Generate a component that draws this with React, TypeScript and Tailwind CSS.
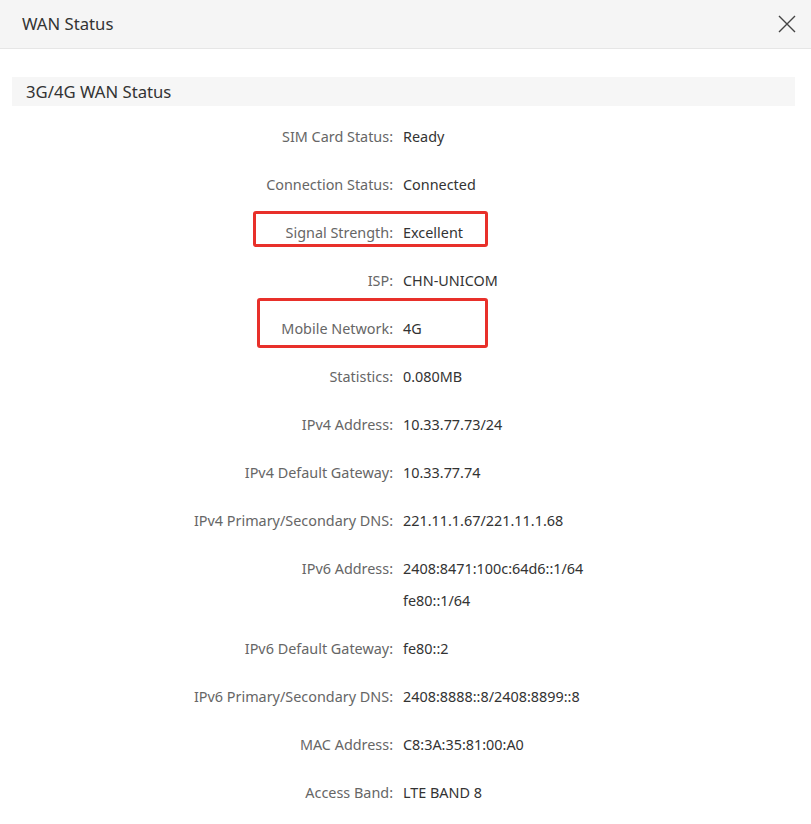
import React from "react";

const rows: { label: string; values: string[] }[] = [
  { label: "SIM Card Status:", values: ["Ready"] },
  { label: "Connection Status:", values: ["Connected"] },
  { label: "Signal Strength:", values: ["Excellent"] },
  { label: "ISP:", values: ["CHN-UNICOM"] },
  { label: "Mobile Network:", values: ["4G"] },
  { label: "Statistics:", values: ["0.080MB"] },
  { label: "IPv4 Address:", values: ["10.33.77.73/24"] },
  { label: "IPv4 Default Gateway:", values: ["10.33.77.74"] },
  { label: "IPv4 Primary/Secondary DNS:", values: ["221.11.1.67/221.11.1.68"] },
  { label: "IPv6 Address:", values: ["2408:8471:100c:64d6::1/64", "fe80::1/64"] },
  { label: "IPv6 Default Gateway:", values: ["fe80::2"] },
  { label: "IPv6 Primary/Secondary DNS:", values: ["2408:8888::8/2408:8899::8"] },
  { label: "MAC Address:", values: ["C8:3A:35:81:00:A0"] },
  { label: "Access Band:", values: ["LTE BAND 8"] },
];

export default function App() {
  return (
    <div
      className="relative w-[811px] h-[824px] bg-white overflow-hidden"
      style={{ fontFamily: '"Noto Sans", "Open Sans", sans-serif' }}
    >
      <div className="h-[49px] flex items-center justify-between pl-[22px] pr-[14px] bg-[#f5f5f5] border-b border-[#e6e6e6]">
        <span className="text-[16.7px] text-[#333]">WAN Status</span>
        <svg width="20" height="20" viewBox="0 0 20 20" className="text-[#444]">
          <path d="M2 2 L18 18 M18 2 L2 18" stroke="currentColor" strokeWidth="1.4" fill="none" />
        </svg>
      </div>
      <div className="pt-[28px] pl-[12px] pr-[16px]">
        <div className="h-[29px] flex items-center pl-[14px] bg-[#f6f6f6] text-[16.7px] text-[#333]">
          3G/4G WAN Status
        </div>
        <div className="pt-[15px] flex flex-col gap-4 text-[14.4px]">
          {rows.map((r) => (
            <div key={r.label} className="flex">
              <div className="w-[381px] shrink-0 text-right text-[#666] leading-[32px]">{r.label}</div>
              <div className="pl-[10px] text-[#333] flex flex-col">
                {r.values.map((v) => (
                  <span key={v} className="leading-[32px]">{v}</span>
                ))}
              </div>
            </div>
          ))}
        </div>
      </div>
      <div className="absolute left-[253px] top-[211px] w-[235px] h-[36px] border-[3px] border-[#e8302a] rounded-[3px]" />
      <div className="absolute left-[257px] top-[298px] w-[231px] h-[50px] border-[3px] border-[#e8302a] rounded-[3px]" />
    </div>
  );
}
